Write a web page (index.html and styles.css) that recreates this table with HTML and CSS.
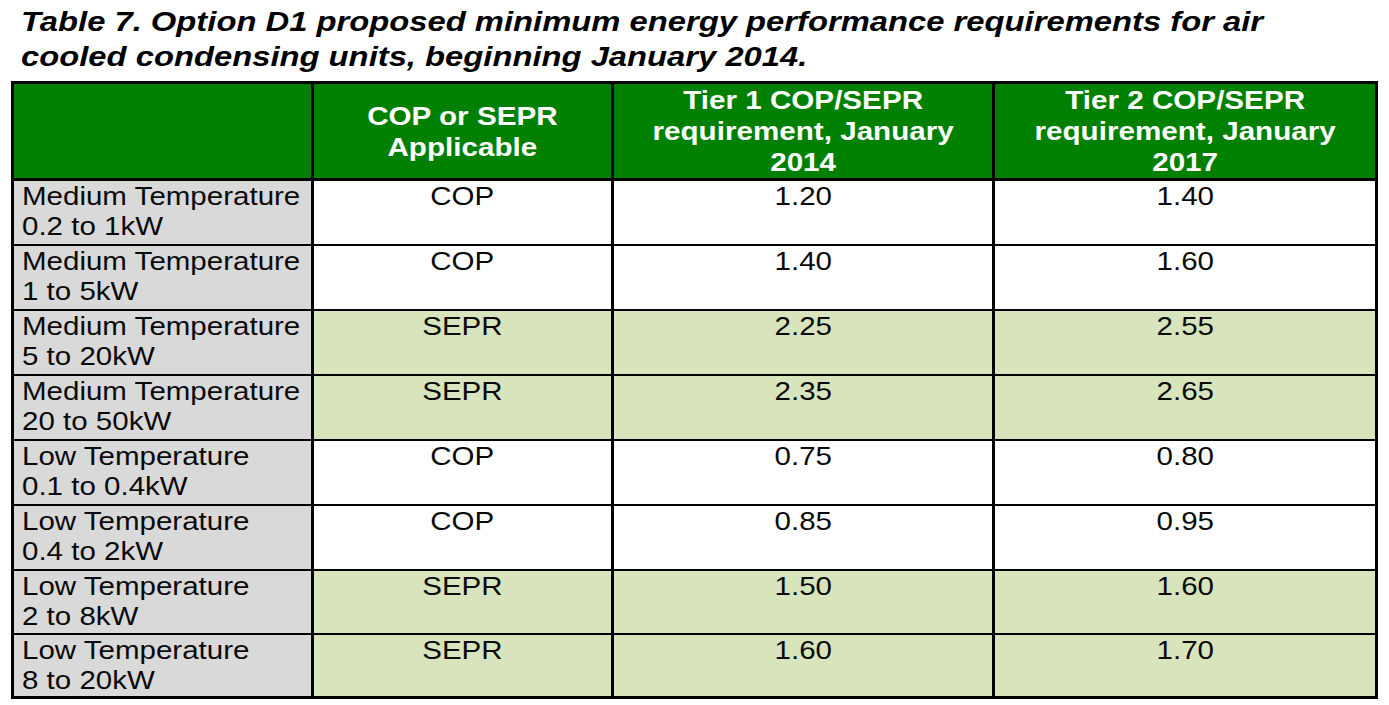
FILE: index.html
```html
<!DOCTYPE html>
<html lang="en">
<head>
<meta charset="utf-8">
<title>Table 7</title>
<link rel="stylesheet" href="styles.css">
</head>
<body>
<div class="title"><span class="sx">Table 7. Option D1 proposed minimum energy performance requirements for air<br>cooled condensing units, beginning January 2014.</span></div>
<table class="grid">
  <colgroup>
    <col class="w1"><col class="w2"><col class="w3"><col class="w4">
  </colgroup>
  <thead>
    <tr class="hrow">
      <th></th>
      <th><span class="sh">COP or SEPR<br>Applicable</span></th>
      <th><span class="sh">Tier 1 COP/SEPR<br>requirement, January<br>2014</span></th>
      <th><span class="sh">Tier 2 COP/SEPR<br>requirement, January<br>2017</span></th>
    </tr>
  </thead>
  <tbody>
    <tr class="r white"><td class="lab"><span class="sl">Medium Temperature<br>0.2 to 1kW</span></td><td><span class="sc">COP</span></td><td><span class="sc">1.20</span></td><td><span class="sc">1.40</span></td></tr>
    <tr class="r white"><td class="lab"><span class="sl">Medium Temperature<br>1 to 5kW</span></td><td><span class="sc">COP</span></td><td><span class="sc">1.40</span></td><td><span class="sc">1.60</span></td></tr>
    <tr class="r green"><td class="lab"><span class="sl">Medium Temperature<br>5 to 20kW</span></td><td><span class="sc">SEPR</span></td><td><span class="sc">2.25</span></td><td><span class="sc">2.55</span></td></tr>
    <tr class="r green"><td class="lab"><span class="sl">Medium Temperature<br>20 to 50kW</span></td><td><span class="sc">SEPR</span></td><td><span class="sc">2.35</span></td><td><span class="sc">2.65</span></td></tr>
    <tr class="r white"><td class="lab"><span class="sl">Low Temperature<br>0.1 to 0.4kW</span></td><td><span class="sc">COP</span></td><td><span class="sc">0.75</span></td><td><span class="sc">0.80</span></td></tr>
    <tr class="r white"><td class="lab"><span class="sl">Low Temperature<br>0.4 to 2kW</span></td><td><span class="sc">COP</span></td><td><span class="sc">0.85</span></td><td><span class="sc">0.95</span></td></tr>
    <tr class="r green short"><td class="lab"><span class="sl">Low Temperature<br>2 to 8kW</span></td><td><span class="sc">SEPR</span></td><td><span class="sc">1.50</span></td><td><span class="sc">1.60</span></td></tr>
    <tr class="r green short"><td class="lab"><span class="sl">Low Temperature<br>8 to 20kW</span></td><td><span class="sc">SEPR</span></td><td><span class="sc">1.60</span></td><td><span class="sc">1.70</span></td></tr>
  </tbody>
</table>
</body>
</html>
```
FILE: styles.css
```css
html, body {
  margin: 0;
  padding: 0;
  background: #ffffff;
}

body {
  font-family: "Liberation Sans", Arial, sans-serif;
  color: #000000;
}

.title {
  margin: 4px 0 0 0;
  padding-left: 21px;
  font-style: italic;
  font-weight: bold;
  font-size: 28px;
  line-height: 35px;
  color: #000;
  height: 70px;
}

.sx {
  display: inline-block;
  white-space: nowrap;
  transform: scaleX(1.17);
  transform-origin: left center;
}

.sh {
  display: inline-block;
  white-space: nowrap;
  transform: scaleX(1.185);
  transform-origin: center center;
}

.sc {
  display: inline-block;
  white-space: nowrap;
  transform: scaleX(1.135);
  transform-origin: center center;
}

.sl {
  display: inline-block;
  white-space: nowrap;
  transform: scaleX(1.135);
  transform-origin: left center;
}

.grid {
  margin: 7px 0 0 11px;
  border-collapse: collapse;
  table-layout: fixed;
  width: 1366px;
  border: 3px solid #000;
}

.w1 { width: 300px; }
.w2 { width: 300px; }
.w3 { width: 381px; }
.w4 { width: 383px; }

.grid th,
.grid td {
  border-top: 2px solid #000;
  border-bottom: 2px solid #000;
  border-left: 3px solid #000;
  border-right: 3px solid #000;
  padding: 0;
}

.hrow {
  height: 97px;
}

.grid th {
  background: #008000;
  color: #ffffff;
  font-weight: bold;
  font-size: 25px;
  line-height: 31px;
  text-align: center;
  vertical-align: middle;
  border-bottom: 3px solid #000;
  padding-top: 1px;
}

.r {
  height: 65px;
}

.r.short {
  height: 64px;
}

.grid td {
  font-size: 26px;
  line-height: 30px;
  text-align: center;
  vertical-align: top;
  padding-top: 0;
  color: #0a0a0a;
}

.grid td.lab {
  text-align: left;
  padding-left: 8px;
  background: #d9d9d9;
}

.white td {
  background: #ffffff;
}

.green td {
  background: #d8e4bc;
}

.white td.lab,
.green td.lab {
  background: #d9d9d9;
}
```
